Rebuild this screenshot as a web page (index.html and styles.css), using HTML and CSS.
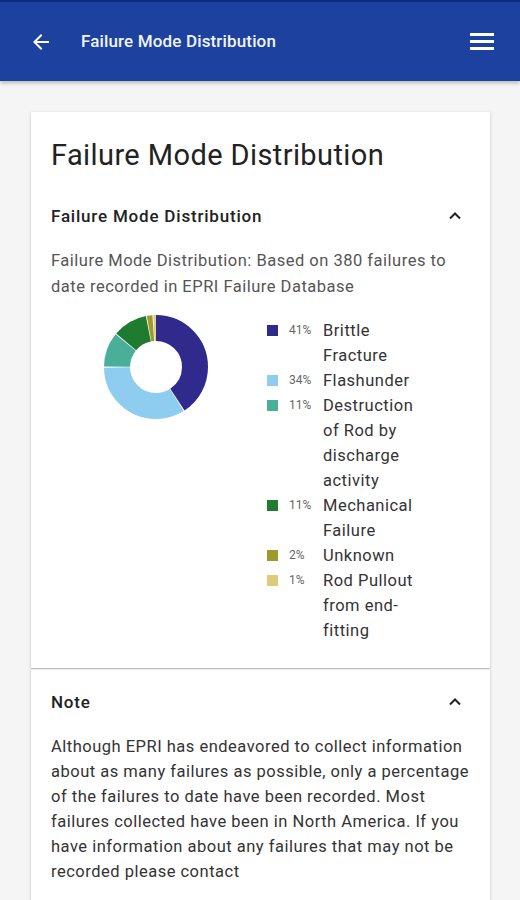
FILE: index.html
```html
<!DOCTYPE html>
<html lang="en">
<head>
    <meta charset="UTF-8">
    <meta name="viewport" content="width=device-width, initial-scale=1.0">
    <title>Failure Mode Distribution</title>
    <link rel="stylesheet" href="styles.css">
</head>
<body>
    <header class="appbar">
        <svg class="back-icon" viewBox="0 0 24 24" width="24" height="24">
            <path d="M20 11H7.83l5.59-5.59L12 4l-8 8 8 8 1.41-1.41L7.83 13H20v-2z" fill="#fff"/>
        </svg>
        <span class="appbar-title">Failure Mode Distribution</span>
        <svg class="menu-icon" viewBox="0 0 24 20" width="24" height="20">
            <rect x="0" y="2" width="24" height="3" fill="#fff"/>
            <rect x="0" y="9" width="24" height="3" fill="#fff"/>
            <rect x="0" y="16" width="24" height="3" fill="#fff"/>
        </svg>
    </header>

    <main class="content">
        <section class="panel first">
            <h1 class="card-title">Failure Mode Distribution</h1>

            <div class="panel-header">
                <span>Failure Mode Distribution</span>
                <svg class="chevron" viewBox="0 0 16 16" width="16" height="16">
                    <path d="M3 10.5 L8 5.5 L13 10.5" fill="none" stroke="#222" stroke-width="2"/>
                </svg>
            </div>
            <div class="panel-body">
                <p class="description">Failure Mode Distribution: Based on 380 failures to date recorded in EPRI Failure Database</p>

                <div class="chart-row">
                    <!-- donut: r=39, stroke 26, circumference 245.04 -->
                    <svg class="donut" viewBox="0 0 106 106" width="106" height="106">
                        <g transform="rotate(-90 53 53)" fill="none" stroke-width="26">
                            <circle cx="53" cy="53" r="39" stroke="#2f2a8c" stroke-dasharray="99.7 245.04" stroke-dashoffset="0"/>
                            <circle cx="53" cy="53" r="39" stroke="#8ecdf0" stroke-dasharray="82.5 245.04" stroke-dashoffset="-100.47"/>
                            <circle cx="53" cy="53" r="39" stroke="#4aaf98" stroke-dasharray="26.2 245.04" stroke-dashoffset="-183.78"/>
                            <circle cx="53" cy="53" r="39" stroke="#1e7b30" stroke-dasharray="26.2 245.04" stroke-dashoffset="-210.74"/>
                            <circle cx="53" cy="53" r="39" stroke="#9c9a2c" stroke-dasharray="4.2 245.04" stroke-dashoffset="-237.69"/>
                            <circle cx="53" cy="53" r="39" stroke="#dccb78" stroke-dasharray="1.9 245.04" stroke-dashoffset="-242.59"/>
                        </g>
                    </svg>

                    <ul class="legend">
                        <li><span class="swatch navy"></span><span class="pct">41%</span><span class="label">Brittle Fracture</span></li>
                        <li><span class="swatch sky"></span><span class="pct">34%</span><span class="label">Flashunder</span></li>
                        <li><span class="swatch teal"></span><span class="pct">11%</span><span class="label">Destruction of Rod by discharge activity</span></li>
                        <li><span class="swatch green"></span><span class="pct">11%</span><span class="label">Mechanical Failure</span></li>
                        <li><span class="swatch olive"></span><span class="pct">2%</span><span class="label">Unknown</span></li>
                        <li><span class="swatch tan"></span><span class="pct">1%</span><span class="label">Rod Pullout from end-fitting</span></li>
                    </ul>
                </div>
            </div>
        </section>

        <section class="panel note-panel">
            <div class="panel-header">
                <span>Note</span>
                <svg class="chevron" viewBox="0 0 16 16" width="16" height="16">
                    <path d="M3 10.5 L8 5.5 L13 10.5" fill="none" stroke="#222" stroke-width="2"/>
                </svg>
            </div>
            <div class="panel-body">
                <p class="note">Although EPRI has endeavored to collect information about as many failures as possible, only a percentage of the failures to date have been recorded. Most failures collected have been in North America. If you have information about any failures that may not be recorded please contact</p>
            </div>
        </section>
    </main>
</body>
</html>
```

FILE: styles.css
```css
body {
    margin: 0;
    font-family: Roboto, "Noto Sans", Arial, sans-serif;
    background-color: #f5f5f5;
    color: #333;
    height: 900px;
    overflow: hidden;
}
.appbar {
    height: 79px;
    background-color: #1c419e;
    border-top: 2px solid #0b2c7e;
    display: flex;
    align-items: center;
    padding: 0 26px 0 29px;
    box-shadow: 0 2px 4px rgba(0, 0, 0, 0.25);
    position: relative;
}
.back-icon {
    flex-shrink: 0;
}
.appbar-title {
    color: #f2f4fb;
    font-size: 17px;
    font-weight: 500;
    letter-spacing: 0.15px;
    margin-left: 28px;
    margin-top: -2px;
    flex: 1;
}
.menu-icon {
    flex-shrink: 0;
    margin-top: -2px;
}
.content {
    padding: 31px 30px 0 31px;
}
.panel {
    background: #fff;
    box-shadow: 0 1px 3px rgba(0, 0, 0, 0.18), 0 1px 1px rgba(0, 0, 0, 0.1);
}
.panel.first {
    padding-bottom: 25px;
}
.panel + .panel {
    margin-top: 1px;
    border-top: 1px solid #ececec;
}
.note-panel {
    padding-bottom: 60px;
}
.card-title {
    margin: 0;
    padding: 25px 20px 9px;
    font-size: 29px;
    font-weight: 400;
    letter-spacing: 0.4px;
    color: #222;
    line-height: 36px;
}
.panel-header {
    display: flex;
    justify-content: space-between;
    align-items: center;
    padding: 2px 27px 0 20px;
    height: 64px;
    font-size: 17px;
    font-weight: 500;
    letter-spacing: 0.8px;
    color: #222;
}
.note-panel .panel-header {
    padding-top: 0;
}
.panel-body {
    padding: 0 20px;
}
.description {
    margin: 0;
    font-size: 16.5px;
    letter-spacing: 0.5px;
    line-height: 26px;
    color: #555;
}
.chart-row {
    display: flex;
    align-items: flex-start;
    margin-top: 14px;
}
.donut {
    margin-left: 52px;
    flex-shrink: 0;
}
.legend {
    list-style: none;
    margin: 4px 0 0 58px;
    padding: 0;
}
.legend li {
    display: grid;
    grid-template-columns: 22px 34px 100px;
    font-size: 16.5px;
    letter-spacing: 0.5px;
    line-height: 25px;
    color: #333;
}
.swatch {
    width: 11px;
    height: 11px;
    margin-top: 7px;
}
.pct {
    font-size: 12px;
    letter-spacing: 0;
    color: #666;
}
.navy { background: #2f2a8c; }
.sky { background: #8ecdf0; }
.teal { background: #4aaf98; }
.green { background: #1e7b30; }
.olive { background: #9c9a2c; }
.tan { background: #dccb78; }
.note {
    margin: 0;
    font-size: 16.5px;
    letter-spacing: 0.5px;
    line-height: 25px;
    color: #333;
}
```
